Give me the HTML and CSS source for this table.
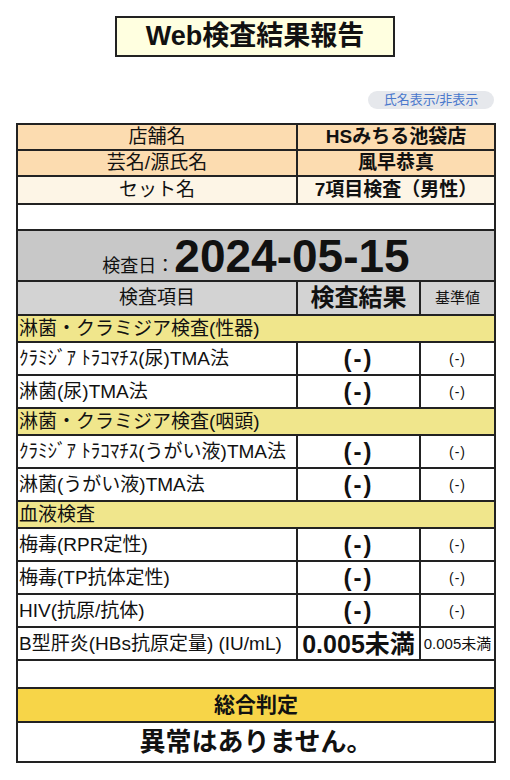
FILE: index.html
```html
<!DOCTYPE html>
<html lang="ja">
<head>
<meta charset="utf-8">
<title>Web検査結果報告</title>
<link rel="stylesheet" href="styles.css">
</head>
<body>
<div class="page">
  <h1 class="title">Web検査結果報告</h1>
  <div class="toggle-row"><button class="toggle" type="button">氏名表示/非表示</button></div>
  <table class="report">
    <colgroup><col class="c1"><col class="c2"><col class="c3"></colgroup>
    <tr class="info peach"><td class="label">店舗名</td><td class="value" colspan="2">HSみちる池袋店</td></tr>
    <tr class="info peach"><td class="label">芸名/源氏名</td><td class="value" colspan="2">風早恭真</td></tr>
    <tr class="info cream tall"><td class="label">セット名</td><td class="value" colspan="2">7項目検査（男性）</td></tr>
    <tr class="blank"><td colspan="3"></td></tr>
    <tr class="date-row"><td colspan="3"><div class="date-line"><span class="date-label">検査日：</span><span class="date">2024-05-15</span></div></td></tr>
    <tr class="head"><td class="h-item">検査項目</td><td class="h-res">検査結果</td><td class="h-ref">基準値</td></tr>
    <tr class="section"><td colspan="3">淋菌・クラミジア検査(性器)</td></tr>
    <tr class="row"><td class="item">ｸﾗﾐｼﾞｱ ﾄﾗｺﾏﾁｽ(尿)TMA法</td><td class="res">(-)</td><td class="ref">(-)</td></tr>
    <tr class="row"><td class="item">淋菌(尿)TMA法</td><td class="res">(-)</td><td class="ref">(-)</td></tr>
    <tr class="section"><td colspan="3">淋菌・クラミジア検査(咽頭)</td></tr>
    <tr class="row"><td class="item">ｸﾗﾐｼﾞｱ ﾄﾗｺﾏﾁｽ(うがい液)TMA法</td><td class="res">(-)</td><td class="ref">(-)</td></tr>
    <tr class="row"><td class="item">淋菌(うがい液)TMA法</td><td class="res">(-)</td><td class="ref">(-)</td></tr>
    <tr class="section"><td colspan="3">血液検査</td></tr>
    <tr class="row"><td class="item">梅毒(RPR定性)</td><td class="res">(-)</td><td class="ref">(-)</td></tr>
    <tr class="row"><td class="item">梅毒(TP抗体定性)</td><td class="res">(-)</td><td class="ref">(-)</td></tr>
    <tr class="row"><td class="item">HIV(抗原/抗体)</td><td class="res">(-)</td><td class="ref">(-)</td></tr>
    <tr class="row"><td class="item">B型肝炎(HBs抗原定量) (IU/mL)</td><td class="res num">0.005未満</td><td class="ref num">0.005未満</td></tr>
    <tr class="blank2"><td colspan="3"></td></tr>
    <tr class="verdict-head"><td colspan="3">総合判定</td></tr>
    <tr class="verdict"><td colspan="3">異常はありません。</td></tr>
  </table>
</div>
</body>
</html>
```

FILE: styles.css
```css
* { box-sizing: border-box; }
html, body { margin: 0; padding: 0; background: #fff; }
body {
  font-family: "Liberation Sans", "Noto Sans CJK JP", sans-serif;
  color: #111;
}
.page {
  width: 478px;
  margin: 0 auto;
  padding-top: 16px;
}
.title {
  width: 280px;
  height: 41px;
  margin: 0 auto;
  border: 2px solid #222;
  background: #ffffe0;
  font-size: 27px;
  font-weight: bold;
  line-height: 37px;
  text-align: center;
}
.toggle-row {
  display: flex;
  justify-content: flex-end;
  margin-top: 34px;
  height: 18px;
}
.toggle {
  width: 126px;
  height: 18px;
  padding: 0;
  border: none;
  border-radius: 9px;
  background: #e6e8ec;
  color: #4a78cc;
  font-family: "Liberation Sans", "Noto Sans CJK JP", sans-serif;
  font-size: 13px;
  line-height: 18px;
}
.report {
  margin-top: 14px;
  width: 478px;
  border-collapse: collapse;
  table-layout: fixed;
}
.c1 { width: 280px; }
.c2 { width: 123px; }
.c3 { width: 75px; }
.report td {
  border: 2px solid #222;
  padding: 0;
  text-align: center;
  vertical-align: middle;
  white-space: nowrap;
  overflow: hidden;
  font-size: 19px;
  line-height: 22px;
}
.info td { height: 26px; }
.info.tall td { height: 28px; }
.peach td { background: #fcdcb0; }
.cream td { background: #fdf5e6; }
.info .value { font-weight: bold; }
.blank td { height: 26px; background: #fff; }
.date-row td {
  height: 51px;
  background: #c8c8c8;
}
.date-line {
  display: flex;
  justify-content: center;
  align-items: baseline;
  height: 49px;
  padding-top: 4px;
  line-height: 42px;
}
.date-label { font-size: 18px; }
.date { font-size: 46px; font-weight: bold; }
.head td { height: 34px; background: #d3d3d3; }
.h-res { font-size: 24px !important; font-weight: bold; }
.h-ref { font-size: 15px !important; }
.section td {
  height: 27px;
  background: #f0e68c;
  text-align: left;
  padding-left: 1px;
}
.row td { height: 33px; background: #fff; }
.row .item { text-align: left; padding-left: 1px; }
.row .res { font-size: 24px; font-weight: bold; letter-spacing: 2px; }
.row .ref { font-size: 14px; letter-spacing: 1px; }
.row .res.num { font-size: 25px; letter-spacing: 0; }
.row .ref.num { font-size: 15px; letter-spacing: 0; }
.blank2 td { height: 28px; background: #fff; }
.verdict-head td {
  height: 34px;
  background: #f7d548;
  font-size: 21px;
  font-weight: bold;
}
.verdict td {
  height: 40px;
  background: #fff;
  font-size: 26px;
  font-weight: bold;
  border-top-width: 1px;
}
```
